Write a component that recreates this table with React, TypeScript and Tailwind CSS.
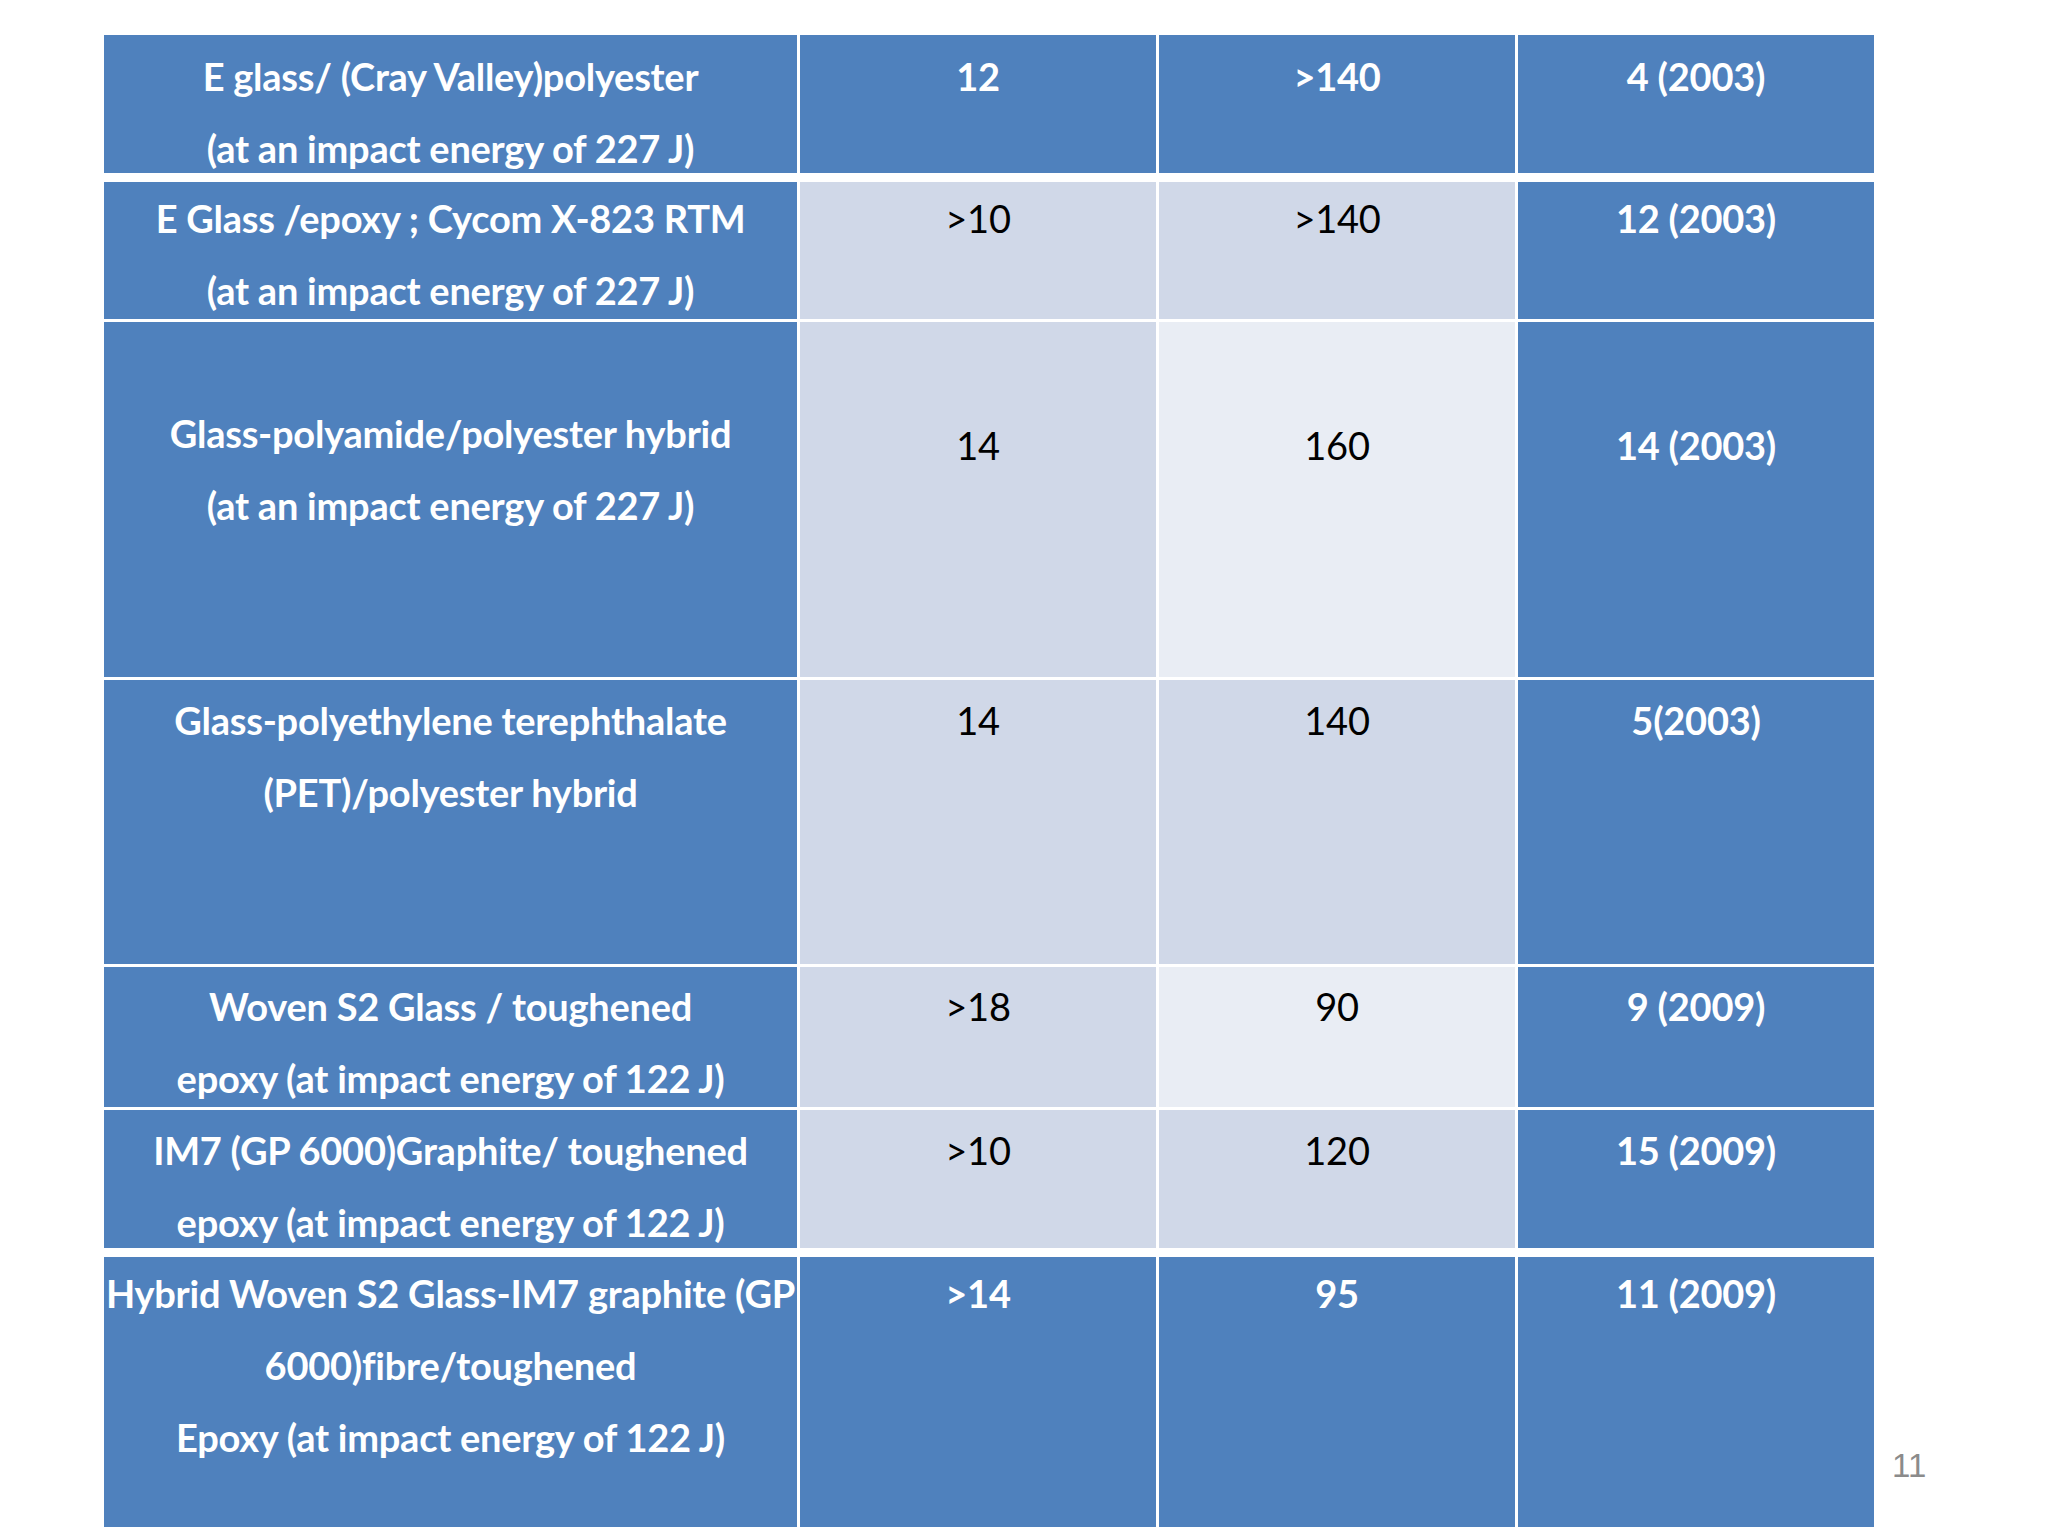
type Tone = "blue" | "light" | "pale";

type Row = {
  h: string;
  mt: string;
  pt1: string;
  pt2: string;
  first: string[];
  cells: { text: string; tone: Tone }[];
  tones1: Tone;
};

const rows: Row[] = [
  {
    h: "h-[138px]",
    mt: "mt-0",
    pt1: "pt-[5px]",
    pt2: "pt-[5px]",
    tones1: "blue",
    first: ["E glass/ (Cray Valley)polyester", "(at an impact energy of 227 J)"],
    cells: [
      { text: "12", tone: "blue" },
      { text: ">140", tone: "blue" },
      { text: "4 (2003)", tone: "blue" },
    ],
  },
  {
    h: "h-[137px]",
    mt: "mt-[9px]",
    pt1: "pt-0",
    pt2: "pt-0",
    tones1: "blue",
    first: ["E Glass /epoxy ; Cycom X-823 RTM", "(at an impact energy of 227 J)"],
    cells: [
      { text: ">10", tone: "light" },
      { text: ">140", tone: "light" },
      { text: "12 (2003)", tone: "blue" },
    ],
  },
  {
    h: "h-[355px]",
    mt: "mt-[3px]",
    pt1: "pt-[75px]",
    pt2: "pt-[87px]",
    tones1: "blue",
    first: ["Glass-polyamide/polyester hybrid", "(at an impact energy of 227 J)"],
    cells: [
      { text: "14", tone: "light" },
      { text: "160", tone: "pale" },
      { text: "14 (2003)", tone: "blue" },
    ],
  },
  {
    h: "h-[284px]",
    mt: "mt-[3px]",
    pt1: "pt-[4px]",
    pt2: "pt-[4px]",
    tones1: "blue",
    first: ["Glass-polyethylene terephthalate", "(PET)/polyester hybrid"],
    cells: [
      { text: "14", tone: "light" },
      { text: "140", tone: "light" },
      { text: "5(2003)", tone: "blue" },
    ],
  },
  {
    h: "h-[140px]",
    mt: "mt-[3px]",
    pt1: "pt-[3px]",
    pt2: "pt-[3px]",
    tones1: "blue",
    first: ["Woven S2 Glass / toughened", "epoxy (at impact energy of 122 J)"],
    cells: [
      { text: ">18", tone: "light" },
      { text: "90", tone: "pale" },
      { text: "9 (2009)", tone: "blue" },
    ],
  },
  {
    h: "h-[138px]",
    mt: "mt-[3px]",
    pt1: "pt-[4px]",
    pt2: "pt-[4px]",
    tones1: "blue",
    first: ["IM7 (GP 6000)Graphite/ toughened", "epoxy (at impact energy of 122 J)"],
    cells: [
      { text: ">10", tone: "light" },
      { text: "120", tone: "light" },
      { text: "15 (2009)", tone: "blue" },
    ],
  },
  {
    h: "h-[270px]",
    mt: "mt-[9px]",
    pt1: "pt-0",
    pt2: "pt-0",
    tones1: "blue",
    first: [
      "Hybrid Woven S2 Glass-IM7 graphite (GP",
      "6000)fibre/toughened",
      "Epoxy (at impact energy of 122 J)",
    ],
    cells: [
      { text: ">14", tone: "blue" },
      { text: "95", tone: "blue" },
      { text: "11 (2009)", tone: "blue" },
    ],
  },
];

const toneClass: Record<Tone, string> = {
  blue: "bg-[#4f81bd] text-white font-bold",
  light: "bg-[#d0d8e8] text-black font-normal",
  pale: "bg-[#e9edf4] text-black font-normal",
};

export default function App() {
  return (
    <div className="w-[2048px] h-[1536px] bg-white overflow-hidden flex items-start pl-[104px] pt-[35px] font-['Lato',_sans-serif]">
      {/* TABLE */}
      <div className="flex flex-col w-[1771px]">
        {rows.map((row, i) => (
          <div key={i} className={`flex gap-[3px] ${row.h} ${row.mt}`}>
            <div
              className={`w-[693px] text-center text-[38px] tracking-[-0.25px] leading-[72px] ${row.pt1} ${toneClass[row.tones1]}`}
            >
              {row.first.map((line) => (
                <div key={line} className="whitespace-nowrap">
                  {line}
                </div>
              ))}
            </div>
            {row.cells.map((c, j) => (
              <div
                key={j}
                className={`w-[356px] text-center text-[38px] tracking-[-0.25px] leading-[72px] ${row.pt2} ${toneClass[c.tone]}`}
              >
                {c.text}
              </div>
            ))}
          </div>
        ))}
      </div>

      {/* SLIDE NUMBER */}
      <div className="ml-[17px] mt-[1411px] text-[33px] leading-[40px] text-[#8b8b8b] font-['Liberation_Sans',_sans-serif]">
        11
      </div>
    </div>
  );
}
